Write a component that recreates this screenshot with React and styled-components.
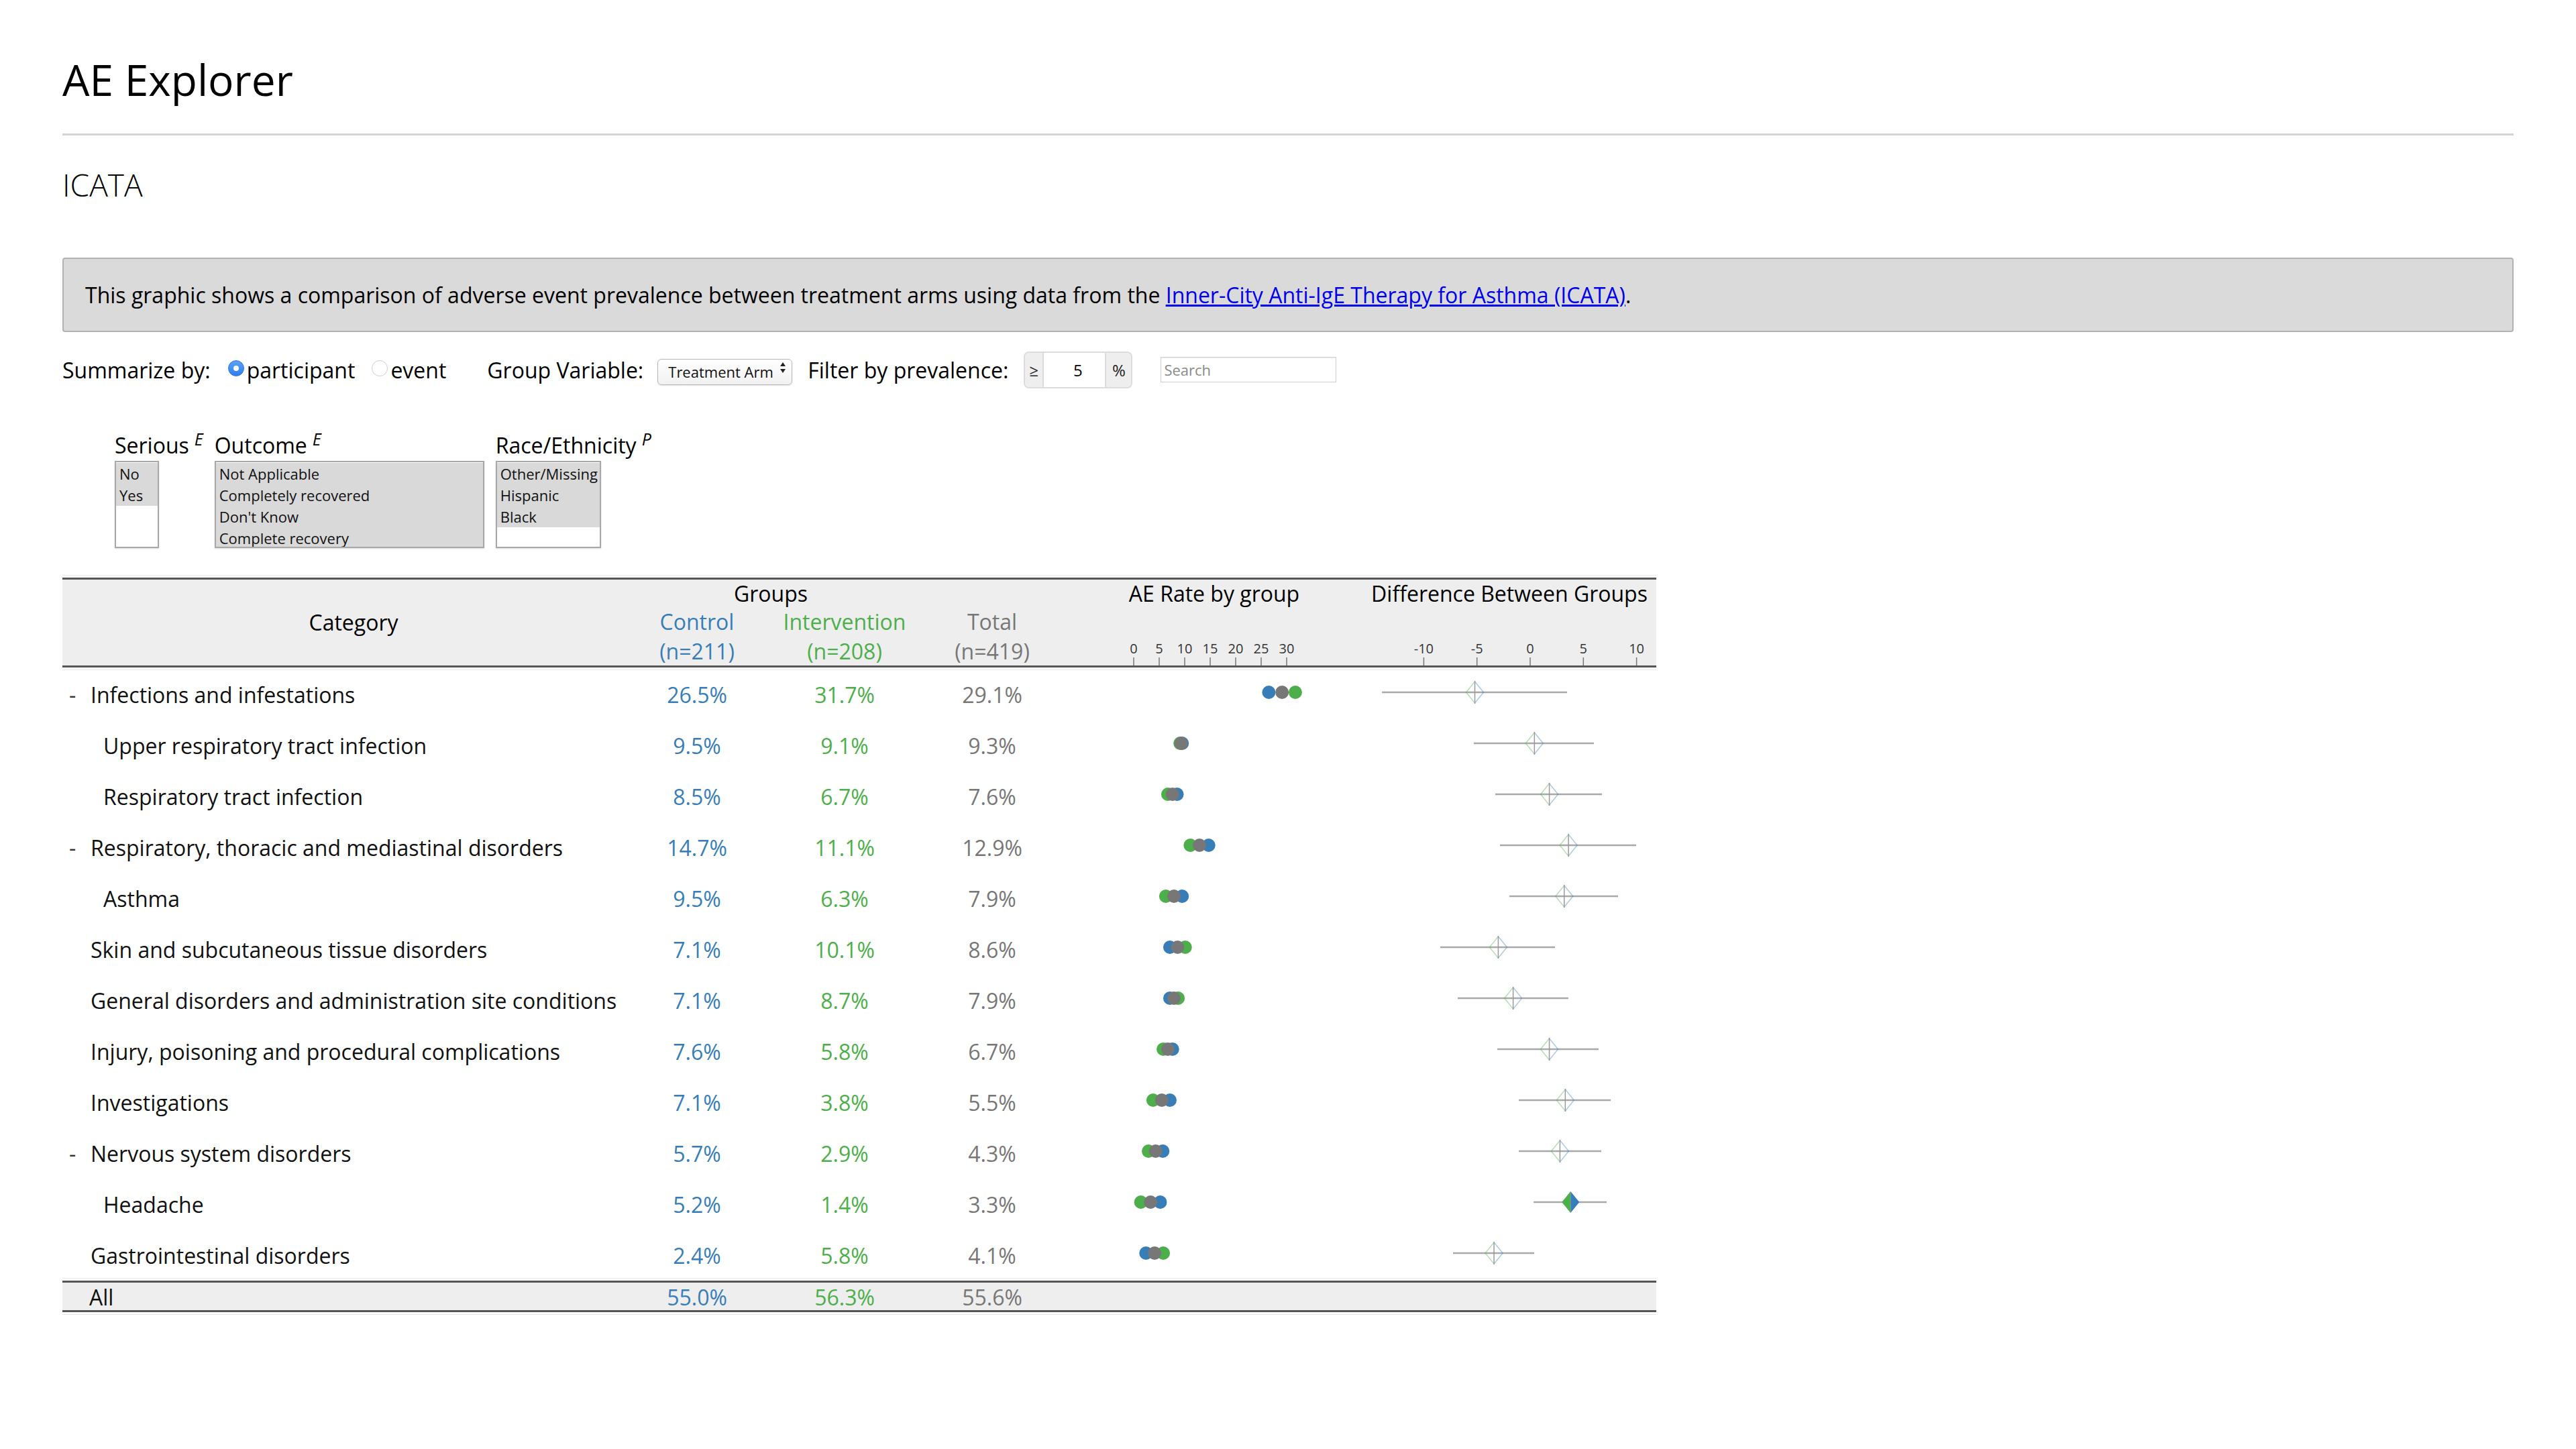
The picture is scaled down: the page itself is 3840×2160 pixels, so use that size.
import React from 'react';
import styled, { createGlobalStyle } from 'styled-components';

const GlobalStyle = createGlobalStyle`
  html, body { margin: 0; padding: 0; background: #fff; }
  body { font-family: "Open Sans", "Liberation Sans", sans-serif; color: #000; }
  * { box-sizing: border-box; }
`;

const BLUE = '#377eb8';
const GREEN = '#4daf4a';
const GRAY = '#777777';
const COLS = '836px 220px 220px 220px 442px 438px';

const Page = styled.div`
  width: 3840px;
  padding: 75px 93px 120px;
`;

const Title = styled.h1`
  margin: 0;
  font-size: 64px;
  font-weight: 400;
  line-height: 87px;
`;

const Rule = styled.hr`
  margin: 37px 0 0;
  border: 0;
  height: 3px;
  background: #d4d4d4;
`;

const Subtitle = styled.h2`
  margin: 42px 0 0;
  font-size: 46px;
  font-weight: 300;
  line-height: 63px;
`;

const InfoBox = styled.div`
  margin-top: 77px;
  height: 111px;
  padding: 0 32px;
  display: flex;
  align-items: center;
  background: #dadada;
  border: 2px solid #b2b2b2;
  border-radius: 4px;
  font-size: 32px;
`;

const Link = styled.a`
  color: #0000ee;
  text-decoration: underline;
`;

const Controls = styled.div`
  margin-top: 29px;
  height: 55px;
  display: flex;
  align-items: center;
  font-size: 32px;
  white-space: nowrap;
`;

const CtlLabel = styled.span`
  margin-right: ${p => p.$mr}px;
`;

const RadioOption = styled.label`
  display: inline-flex;
  align-items: center;
  gap: 4px;
  margin-right: ${p => p.$mr}px;
`;

const RadioDot = styled.span`
  width: 24px;
  height: 24px;
  border-radius: 50%;
  display: inline-flex;
  align-items: center;
  justify-content: center;
  margin-top: -6px;
  background: ${p => (p.$on ? 'linear-gradient(#5aa2f7, #2f7ef0)' : '#fff')};
  border: ${p => (p.$on ? '1px solid #2c74e0' : '1.5px solid #d0d0d0')};
  &::after {
    content: '';
    width: 8px;
    height: 8px;
    border-radius: 50%;
    background: ${p => (p.$on ? '#fff' : 'transparent')};
  }
`;

const SelectWrap = styled.span`
  position: relative;
  display: inline-block;
  width: 201px;
  height: 39px;
  margin-right: 23px;
  margin-top: -6px;
`;

const Select = styled.select`
  appearance: none;
  width: 100%;
  height: 100%;
  padding: 0 20px 0 15px;
  font-family: "Open Sans", "Liberation Sans", sans-serif;
  font-size: 22px;
  color: #111;
  border: 1.5px solid #b9b9b9;
  border-radius: 6px;
  background: linear-gradient(#ffffff, #f1f1f1);
  box-shadow: 0 1px 2px rgba(0, 0, 0, 0.12);
`;

const SelectArrows = styled.svg`
  position: absolute;
  right: 9px;
  top: 10px;
  pointer-events: none;
`;

const InputGroup = styled.div`
  display: inline-flex;
  height: 55px;
  border: 2px solid #dcdcdc;
  border-radius: 8px;
  overflow: hidden;
  margin-right: 42px;
`;

const Addon = styled.span`
  width: ${p => p.$w}px;
  background: #eeeeee;
  display: flex;
  align-items: center;
  justify-content: center;
  font-size: 24px;
  color: #222;
`;

const NumInput = styled.input`
  width: 95px;
  border: 0;
  border-left: 2px solid #dcdcdc;
  border-right: 2px solid #dcdcdc;
  text-align: center;
  font-family: "Open Sans", "Liberation Sans", sans-serif;
  font-size: 24px;
  padding: 0 0 0 10px;
  outline: none;
`;

const Search = styled.input`
  width: 262px;
  height: 38px;
  margin-top: -1px;
  border: 1.5px solid #cfcfcf;
  box-shadow: inset 0 1px 1px rgba(0, 0, 0, 0.08);
  font-family: "Open Sans", "Liberation Sans", sans-serif;
  font-size: 22px;
  padding: 0 4px;
  &::placeholder { color: #8a8a8a; }
`;

const Filters = styled.div`
  margin-top: 53px;
  margin-left: 78px;
  display: flex;
  gap: 17px;
  align-items: flex-start;
`;

const FilterBlock = styled.div`
  display: flex;
  flex-direction: column;
`;

const FilterLabel = styled.div`
  font-size: 32px;
  line-height: 44px;
  white-space: nowrap;
  margin-bottom: 1px;
`;

const Sup = styled.span`
  font-style: italic;
  font-size: 25px;
  vertical-align: 12px;
  margin-left: 8px;
`;

const ListBox = styled.div`
  width: ${p => p.$w}px;
  height: 130px;
  border: 2px solid #a8a8a8;
  box-shadow: 0 1px 2px rgba(0, 0, 0, 0.15);
  background: #fff;
  padding: 1px 0;
  font-size: 22px;
  overflow: hidden;
`;

const ListOption = styled.div`
  height: 32px;
  line-height: 32px;
  padding: 0 5px;
  white-space: nowrap;
  color: #111;
  background: ${p => (p.$sel ? '#d9d9d9' : 'transparent')};
`;

const Table = styled.div`
  width: 2376px;
  margin-top: 44px;
  font-size: 32px;
`;

const Head = styled.div`
  display: grid;
  grid-template-columns: ${COLS};
  grid-template-rows: 42px 42px 44px;
  background: #eeeeee;
  border-top: 3px solid #555;
  border-bottom: 3px solid #555;
  box-shadow: 0 -3px 0 #fff, 0 3px 0 #fff, 0 -4px 0 #e6e6e6, 0 4px 0 #e6e6e6;
`;

const HeadCell = styled.div`
  grid-column: ${p => p.$col};
  grid-row: ${p => p.$row};
  display: flex;
  flex-direction: column;
  align-items: center;
  justify-content: ${p => p.$justify || 'flex-start'};
  color: ${p => p.$color || '#000'};
  padding-left: ${p => p.$pl || 0}px;
  line-height: ${p => p.$lh || 42}px;
  white-space: nowrap;
`;

const HeadLine = styled.span`
  line-height: ${p => p.$lh}px;
`;

const Body = styled.div`
  padding-top: 2px;
`;

const Row = styled.div`
  display: grid;
  grid-template-columns: ${COLS};
  height: 76px;
  align-items: center;
`;

const TotalRow = styled(Row)`
  height: 47px;
  background: #eeeeee;
  border-top: 3px solid #555;
  border-bottom: 3px solid #555;
  box-shadow: 0 -3px 0 #fff, 0 3px 0 #fff, 0 -4px 0 #e6e6e6, 0 4px 0 #e6e6e6;
`;

const CatCell = styled.div`
  padding-left: ${p => p.$pl}px;
  white-space: nowrap;
  color: #111;
`;

const Toggle = styled.span`
  display: inline-block;
  width: 32px;
  margin-left: -32px;
  color: #333;
`;

const NumCell = styled.div`
  text-align: center;
  color: ${p => p.$color};
`;

const ChartCell = styled.svg`
  display: block;
`;

const rows = [
  { name: 'Infections and infestations', level: 0, toggle: true, c: 26.5, i: 31.7, t: 29.1, lo: -13.93, hi: 3.47 },
  { name: 'Upper respiratory tract infection', level: 1, c: 9.5, i: 9.1, t: 9.3, lo: -5.3, hi: 5.99 },
  { name: 'Respiratory tract infection', level: 1, c: 8.5, i: 6.7, t: 7.6, lo: -3.28, hi: 6.75 },
  { name: 'Respiratory, thoracic and mediastinal disorders', level: 0, toggle: true, c: 14.7, i: 11.1, t: 12.9, lo: -2.84, hi: 9.96 },
  { name: 'Asthma', level: 1, c: 9.5, i: 6.3, t: 7.9, lo: -1.95, hi: 8.26 },
  { name: 'Skin and subcutaneous tissue disorders', level: 0, c: 7.1, i: 10.1, t: 8.6, lo: -8.45, hi: 2.33 },
  { name: 'General disorders and administration site conditions', level: 0, c: 7.1, i: 8.7, t: 7.9, lo: -6.81, hi: 3.59 },
  { name: 'Injury, poisoning and procedural complications', level: 0, c: 7.6, i: 5.8, t: 6.7, lo: -3.09, hi: 6.43 },
  { name: 'Investigations', level: 0, c: 7.1, i: 3.8, t: 5.5, lo: -1.07, hi: 7.57 },
  { name: 'Nervous system disorders', level: 0, toggle: true, c: 5.7, i: 2.9, t: 4.3, lo: -1.07, hi: 6.68 },
  { name: 'Headache', level: 1, c: 5.2, i: 1.4, t: 3.3, lo: 0.32, hi: 7.19, sig: true },
  { name: 'Gastrointestinal disorders', level: 0, c: 2.4, i: 5.8, t: 4.1, lo: -7.25, hi: 0.38 },
];

const rateX = v => 101 + v * 7.6;
const diffX = v => 250 + v * 15.86;

const RateAxis = () => (
  <svg width="442" height="86">
    {[0, 5, 10, 15, 20, 25, 30].map(v => (
      <g key={v}>
        <text x={rateX(v)} y="68" textAnchor="middle" fontSize="20" fill="#333" fontFamily="Open Sans, sans-serif">{v}</text>
        <line x1={rateX(v)} x2={rateX(v)} y1="74" y2="86" stroke="#777" strokeWidth="1.5" />
      </g>
    ))}
  </svg>
);

const DiffAxis = () => (
  <svg width="438" height="86">
    {[-10, -5, 0, 5, 10].map(v => (
      <g key={v}>
        <text x={diffX(v)} y="68" textAnchor="middle" fontSize="20" fill="#333" fontFamily="Open Sans, sans-serif">{v}</text>
        <line x1={diffX(v)} x2={diffX(v)} y1="74" y2="86" stroke="#777" strokeWidth="1.5" />
      </g>
    ))}
  </svg>
);

const RateDots = ({ r }) => (
  <ChartCell width="442" height="76">
    <circle cx={rateX(r.c)} cy="35" r="10" fill={BLUE} />
    <circle cx={rateX(r.i)} cy="35" r="10" fill={GREEN} />
    <circle cx={rateX(r.t)} cy="35" r="10" fill={GRAY} />
  </ChartCell>
);

const DiffMark = ({ r }) => {
  const x = diffX(r.c - r.i);
  const y = 35;
  const w = 13;
  const h = 16;
  return (
    <ChartCell width="438" height="76">
      <line x1={diffX(r.lo)} x2={diffX(r.hi)} y1={y} y2={y} stroke="#a9a9a9" strokeWidth="2.5" />
      {r.sig ? (
        <>
          <path d={`M${x - w} ${y} L${x} ${y - h} L${x} ${y + h} Z`} fill={GREEN} />
          <path d={`M${x + w} ${y} L${x} ${y - h} L${x} ${y + h} Z`} fill={BLUE} />
        </>
      ) : (
        <>
          <path d={`M${x} ${y - h} L${x - w} ${y} L${x} ${y + h}`} fill="none" stroke={GREEN} strokeOpacity="0.4" strokeWidth="1.5" />
          <path d={`M${x} ${y - h} L${x + w} ${y} L${x} ${y + h}`} fill="none" stroke={BLUE} strokeOpacity="0.4" strokeWidth="1.5" />
          <line x1={x} x2={x} y1={y - h - 1} y2={y + h + 1} stroke="#9a9a9a" strokeWidth="1.5" />
        </>
      )}
    </ChartCell>
  );
};

const fmt = v => `${v.toFixed(1)}%`;

export default function App() {
  return (
    <Page>
      <GlobalStyle />
      <Title>AE Explorer</Title>
      <Rule />
      <Subtitle>ICATA</Subtitle>
      <InfoBox>
        <span>
          This graphic shows a comparison of adverse event prevalence between treatment arms using data from the{' '}
          <Link href="#">Inner-City Anti-IgE Therapy for Asthma (ICATA)</Link>.
        </span>
      </InfoBox>

      <Controls>
        <CtlLabel $mr={26}>Summarize by:</CtlLabel>
        <RadioOption $mr={25}>
          <RadioDot $on />
          participant
        </RadioOption>
        <RadioOption $mr={61}>
          <RadioDot />
          event
        </RadioOption>
        <CtlLabel $mr={21}>Group Variable:</CtlLabel>
        <SelectWrap>
          <Select defaultValue="arm">
            <option value="arm">Treatment Arm</option>
          </Select>
          <SelectArrows width="10" height="18" viewBox="0 0 10 18">
            <path d="M1 7 L5 1 L9 7 Z" fill="#222" />
            <path d="M1 11 L5 17 L9 11 Z" fill="#222" />
          </SelectArrows>
        </SelectWrap>
        <CtlLabel $mr={23}>Filter by prevalence:</CtlLabel>
        <InputGroup>
          <Addon $w={26}>≥</Addon>
          <NumInput defaultValue="5" />
          <Addon $w={37}>%</Addon>
        </InputGroup>
        <Search placeholder="Search" />
      </Controls>

      <Filters>
        <FilterBlock>
          <FilterLabel>Serious<Sup>E</Sup></FilterLabel>
          <ListBox $w={66}>
            <ListOption $sel>No</ListOption>
            <ListOption $sel>Yes</ListOption>
          </ListBox>
        </FilterBlock>
        <FilterBlock>
          <FilterLabel>Outcome<Sup>E</Sup></FilterLabel>
          <ListBox $w={402}>
            <ListOption $sel>Not Applicable</ListOption>
            <ListOption $sel>Completely recovered</ListOption>
            <ListOption $sel>Don't Know</ListOption>
            <ListOption $sel>Complete recovery</ListOption>
          </ListBox>
        </FilterBlock>
        <FilterBlock>
          <FilterLabel>Race/Ethnicity<Sup>P</Sup></FilterLabel>
          <ListBox $w={157}>
            <ListOption $sel>Other/Missing</ListOption>
            <ListOption $sel>Hispanic</ListOption>
            <ListOption $sel>Black</ListOption>
          </ListBox>
        </FilterBlock>
      </Filters>

      <Table>
        <Head>
          <HeadCell $col="1" $row="1 / 4" $justify="center" $pl={32}>Category</HeadCell>
          <HeadCell $col="2 / 4" $row="1">Groups</HeadCell>
          <HeadCell $col="2" $row="2 / 4" $color={BLUE}>
            <HeadLine $lh={42}>Control</HeadLine>
            <HeadLine $lh={46}>(n=211)</HeadLine>
          </HeadCell>
          <HeadCell $col="3" $row="2 / 4" $color={GREEN}>
            <HeadLine $lh={42}>Intervention</HeadLine>
            <HeadLine $lh={46}>(n=208)</HeadLine>
          </HeadCell>
          <HeadCell $col="4" $row="2 / 4" $color={GRAY}>
            <HeadLine $lh={42}>Total</HeadLine>
            <HeadLine $lh={46}>(n=419)</HeadLine>
          </HeadCell>
          <HeadCell $col="5" $row="1 / 4">
            <HeadLine $lh={42}>AE Rate by group</HeadLine>
            <RateAxis />
          </HeadCell>
          <HeadCell $col="6" $row="1 / 4">
            <HeadLine $lh={42}>Difference Between Groups</HeadLine>
            <DiffAxis />
          </HeadCell>
        </Head>
        <Body>
          {rows.map(r => (
            <Row key={r.name}>
              <CatCell $pl={r.level ? 61 : 42}>
                {r.toggle && <Toggle>-</Toggle>}
                {r.name}
              </CatCell>
              <NumCell $color={BLUE}>{fmt(r.c)}</NumCell>
              <NumCell $color={GREEN}>{fmt(r.i)}</NumCell>
              <NumCell $color={GRAY}>{fmt(r.t)}</NumCell>
              <RateDots r={r} />
              <DiffMark r={r} />
            </Row>
          ))}
        </Body>
        <TotalRow>
          <CatCell $pl={40}>All</CatCell>
          <NumCell $color={BLUE}>55.0%</NumCell>
          <NumCell $color={GREEN}>56.3%</NumCell>
          <NumCell $color={GRAY}>55.6%</NumCell>
          <div />
          <div />
        </TotalRow>
      </Table>
    </Page>
  );
}
